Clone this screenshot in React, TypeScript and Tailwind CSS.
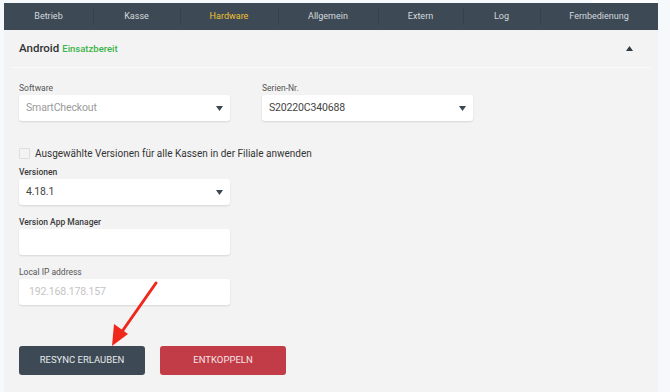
import React from "react";

const tabs: { label: string; w: string; active?: boolean }[] = [
  { label: "Betrieb", w: "w-[89px]" },
  { label: "Kasse", w: "w-[87px]" },
  { label: "Hardware", w: "w-[98px]", active: true },
  { label: "Allgemein", w: "w-[100px]" },
  { label: "Extern", w: "w-[85px]" },
  { label: "Log", w: "w-[77px]" },
  { label: "Fernbedienung", w: "flex-1" },
];

function Caret() {
  return (
    <svg width="7" height="5" viewBox="0 0 7 5" className="shrink-0">
      <path d="M0 0 L7 0 L3.5 5 Z" fill="#3a4650" />
    </svg>
  );
}

function Box({ children, caret }: { children?: React.ReactNode; caret?: boolean }) {
  return (
    <div className="w-[211px] h-[26px] bg-white rounded-[3px] shadow-[0_1px_2px_rgba(0,0,0,0.12)] flex items-center justify-between pl-[7px] pr-[7px]">
      <div className="text-[10.5px] tracking-[-0.15px] leading-none">{children}</div>
      {caret && <Caret />}
    </div>
  );
}

function Label({ children, bold }: { children: React.ReactNode; bold?: boolean }) {
  return (
    <div className={`text-[8.5px] leading-[10px] mb-[2px] ${bold ? "font-medium text-[#3a3a3a]" : "text-[#555]"}`}>
      {children}
    </div>
  );
}

export default function App() {
  return (
    <div
      className="w-[670px] h-[392px] bg-[#f5f9fc] relative overflow-hidden"
      style={{ fontFamily: "Roboto, 'Liberation Sans', sans-serif" }}
    >
      <div className="absolute top-0 left-[592px] w-[66px] h-[3px] bg-[#fbfdfe]" />
      <div className="pt-[3px] pl-[4px] w-[658px]">
        <div className="bg-[#f3f3f3] h-[389px]">
          {/* tabs */}
          <div className="h-[27px] bg-[#3d4a55] flex">
            {tabs.map((t, i) => (
              <div
                key={t.label}
                className={`${t.w} relative flex items-center justify-center text-[9px] ${
                  t.active ? "text-[#f0c030]" : "text-[#d4d9dd]"
                }`}
              >
                {i > 0 && <div className="absolute left-0 top-[5px] bottom-[5px] w-px bg-[#35414b]" />}
                {t.label}
              </div>
            ))}
          </div>
          {/* header */}
          <div className="mx-[8px] h-[38px] border-b border-[#fbfbfb] flex items-center justify-between pl-[7px] pr-[17px]">
            <div className="flex items-baseline gap-[3px]">
              <span className="text-[11.5px] font-medium text-[#333]">Android</span>
              <span className="text-[9.5px] font-medium text-[#3cb44a]">Einsatzbereit</span>
            </div>
            <svg width="7" height="5" viewBox="0 0 7 5">
              <path d="M0 5 L7 5 L3.5 0 Z" fill="#2f3a43" />
            </svg>
          </div>
          {/* form */}
          <div className="pl-[15px] pt-[15px]">
            <div className="flex gap-[32px]">
              <div>
                <Label>Software</Label>
                <Box caret>
                  <span className="text-[#9a9a9a]">SmartCheckout</span>
                </Box>
              </div>
              <div>
                <Label>Serien-Nr.</Label>
                <Box caret>
                  <span className="text-[#444]">S20220C340688</span>
                </Box>
              </div>
            </div>
            <div className="flex items-center gap-[5px] mt-[26px] h-[12px]">
              <div className="w-[11px] h-[11px] border border-[#dedede] bg-[#f3f3f3] rounded-[1px]" />
              <span className="text-[10px] text-[#333]">
                Ausgewählte Versionen für alle Kassen in der Filiale anwenden
              </span>
            </div>
            <div className="mt-[8px]">
              <Label bold>Versionen</Label>
              <Box caret>
                <span className="text-[#444]">4.18.1</span>
              </Box>
            </div>
            <div className="mt-[12px]">
              <Label bold>Version App Manager</Label>
              <Box />
            </div>
            <div className="mt-[12px]">
              <Label>Local IP address</Label>
              <Box>
                <span className="text-[#c4c4c4] pl-[3px]">192.168.178.157</span>
              </Box>
            </div>
            <div className="flex gap-[15px] mt-[41px]">
              <div className="w-[126px] h-[29px] rounded-[3px] bg-[#3d4a55] flex items-center justify-center text-[9.5px] text-[#e6e9ec]">
                RESYNC ERLAUBEN
              </div>
              <div className="w-[126px] h-[29px] rounded-[3px] bg-[#c23c47] flex items-center justify-center text-[9.5px] text-[#f6e3e5]">
                ENTKOPPELN
              </div>
            </div>
          </div>
        </div>
      </div>
      {/* annotation arrow */}
      <svg className="absolute left-0 top-0" width="670" height="392" viewBox="0 0 670 392">
        <line x1="156" y1="283" x2="121" y2="333" stroke="#f0281c" strokeWidth="3" strokeLinecap="round" />
        <path d="M112 346 L114 324 L128 334 Z" fill="#f0281c" />
      </svg>
    </div>
  );
}
